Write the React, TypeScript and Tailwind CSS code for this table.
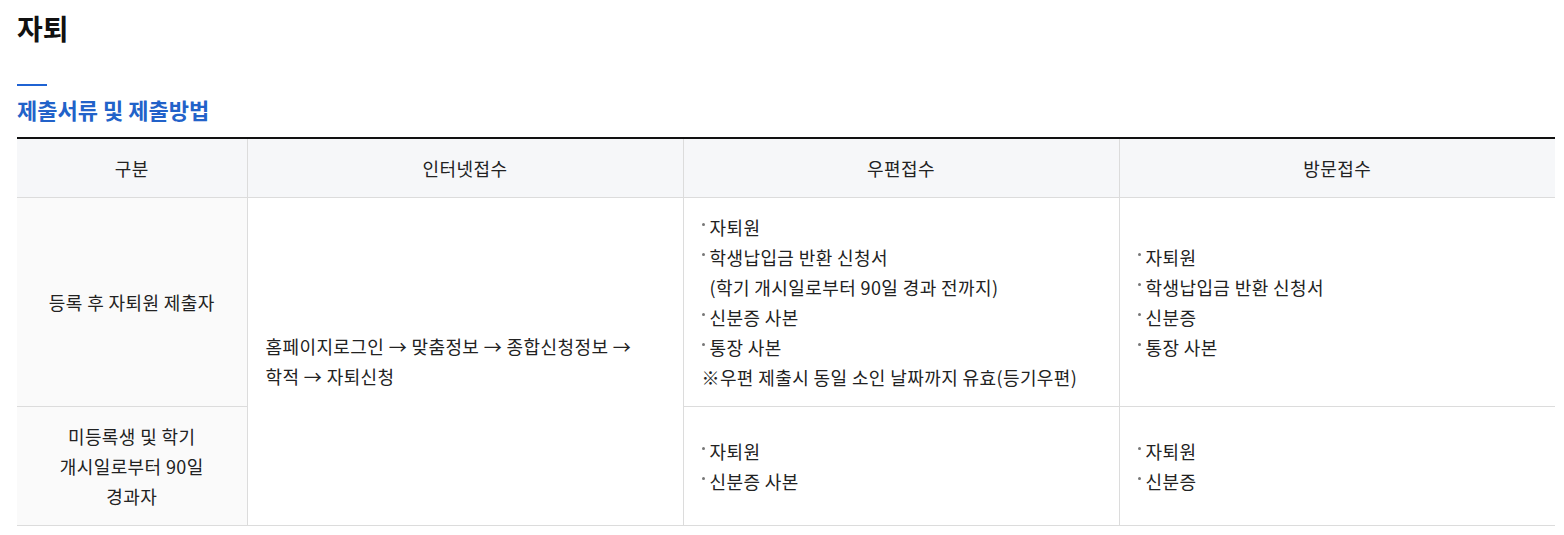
import React from "react";

const font = { fontFamily: '"Noto Sans CJK KR", "Noto Sans", sans-serif' };

function Bullet({ children }: { children: React.ReactNode }) {
  return (
    <li className="flex items-start">
      <span className="mt-[11px] mr-[5px] h-[3px] w-[3px] shrink-0 rounded-full bg-[#777]" />
      <span>{children}</span>
    </li>
  );
}

export default function App() {
  return (
    <div className="bg-white pl-[17px] pr-[9px] text-[#222]" style={font}>
      <h1 className="pt-[8px] text-[28px] font-bold leading-[40px] text-[#111]">자퇴</h1>
      <div className="mt-[36px] h-[2px] w-[30px] bg-[#1f63d3]" />
      <h2 className="mt-[8px] text-[22px] font-bold leading-[30px] text-[#2262c9]">제출서류 및 제출방법</h2>
      <table className="mt-[13px] w-full table-fixed border-collapse border-t-2 border-t-[#111] text-[18px] leading-[30px] tracking-[0.4px]">
        <colgroup>
          <col className="w-[230px]" />
          <col />
          <col />
          <col />
        </colgroup>
        <thead>
          <tr className="h-[59px] bg-[#f6f7f9]">
            <th className="border-b border-r border-[#dcdcdc] font-normal">구분</th>
            <th className="border-b border-r border-[#dcdcdc] font-normal">인터넷접수</th>
            <th className="border-b border-r border-[#dcdcdc] font-normal">우편접수</th>
            <th className="border-b border-[#dcdcdc] font-normal">방문접수</th>
          </tr>
        </thead>
        <tbody>
          <tr className="h-[209px]">
            <td className="border-b border-r border-[#dcdcdc] bg-[#fafafa] text-center">등록 후 자퇴원 제출자</td>
            <td rowSpan={2} className="border-b border-r border-[#dcdcdc] px-[18px] align-middle">
              홈페이지로그인 → 맞춤정보 → 종합신청정보 →<br />학적 → 자퇴신청
            </td>
            <td className="border-b border-r border-[#dcdcdc] px-[18px] py-[14px] align-middle">
              <ul>
                <Bullet>자퇴원</Bullet>
                <Bullet>
                  학생납입금 반환 신청서
                  <br />
                  (학기 개시일로부터 90일 경과 전까지)
                </Bullet>
                <Bullet>신분증 사본</Bullet>
                <Bullet>통장 사본</Bullet>
                <li>※우편 제출시 동일 소인 날짜까지 유효(등기우편)</li>
              </ul>
            </td>
            <td className="border-b border-[#dcdcdc] px-[18px] align-middle">
              <ul>
                <Bullet>자퇴원</Bullet>
                <Bullet>학생납입금 반환 신청서</Bullet>
                <Bullet>신분증</Bullet>
                <Bullet>통장 사본</Bullet>
              </ul>
            </td>
          </tr>
          <tr className="h-[119px]">
            <td className="border-b border-r border-[#dcdcdc] bg-[#fafafa] text-center">
              미등록생 및 학기
              <br />
              개시일로부터 90일
              <br />
              경과자
            </td>
            <td className="border-b border-r border-[#dcdcdc] px-[18px] align-middle">
              <ul>
                <Bullet>자퇴원</Bullet>
                <Bullet>신분증 사본</Bullet>
              </ul>
            </td>
            <td className="border-b border-[#dcdcdc] px-[18px] align-middle">
              <ul>
                <Bullet>자퇴원</Bullet>
                <Bullet>신분증</Bullet>
              </ul>
            </td>
          </tr>
        </tbody>
      </table>
    </div>
  );
}
